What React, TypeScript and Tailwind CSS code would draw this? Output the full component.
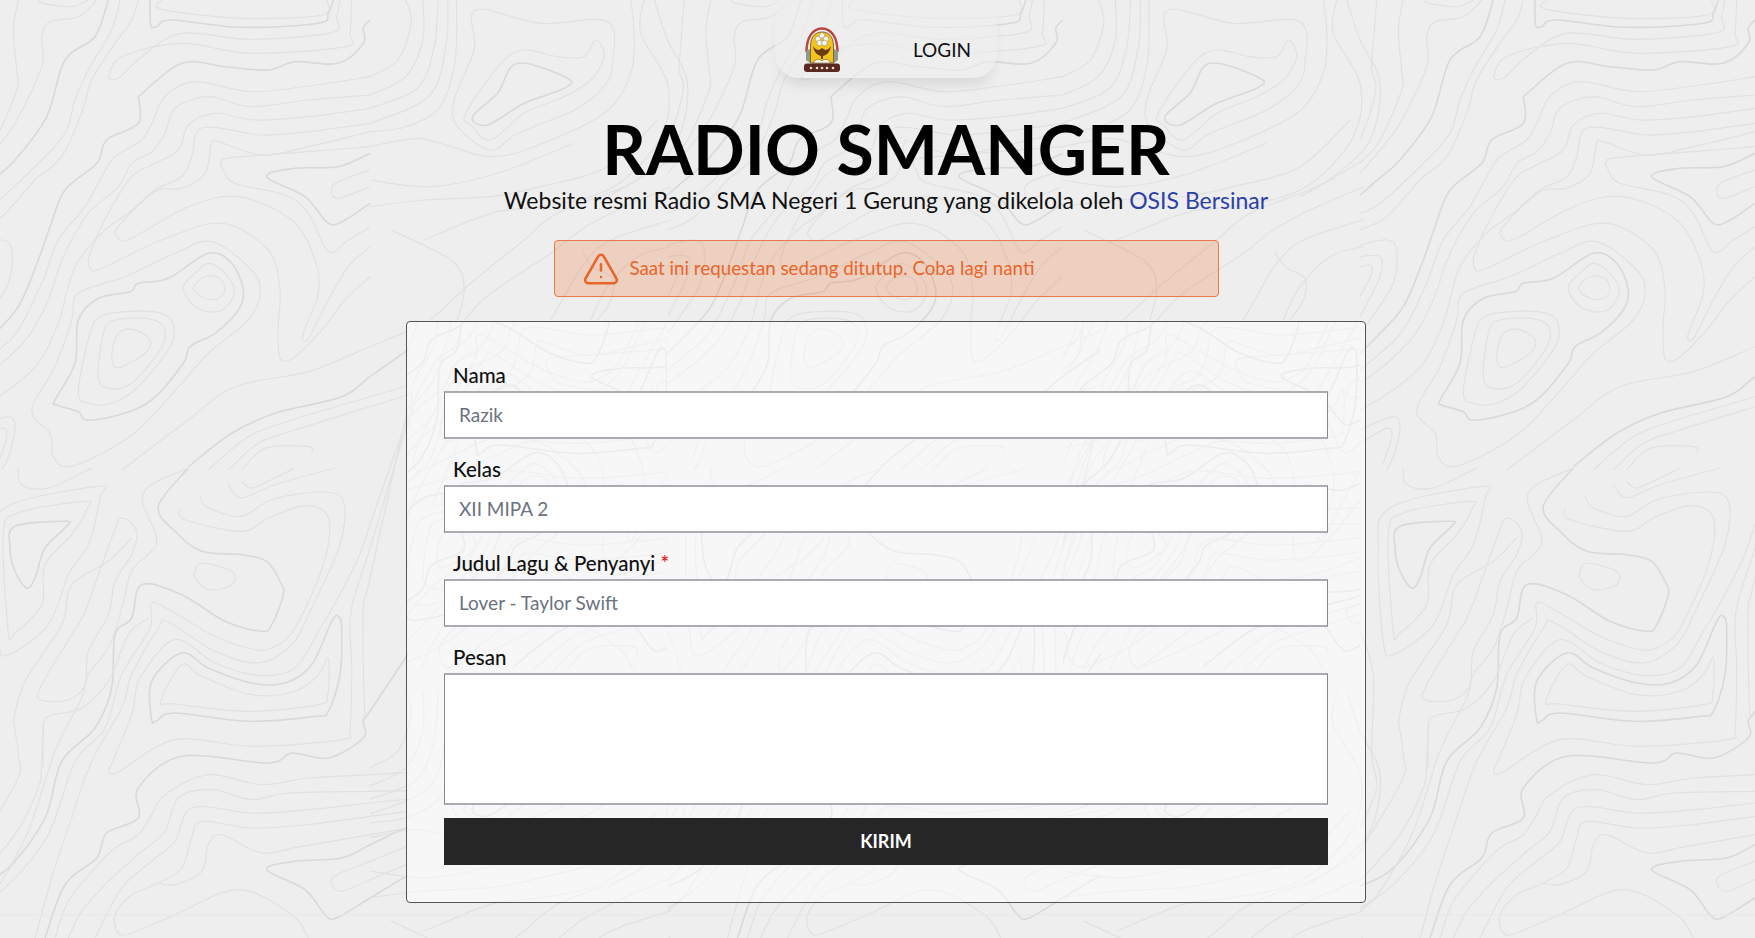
import { TriangleAlert } from "lucide-react";

// contour lines of the page background, traced at 3x zoom
type Line = { h?: boolean; p: number[] };

const TOP: Line[] = [
  { h: true, p: [490, 290, 620, 190, 750, 200, 880, 210, 960, 185, 1090, 190, 1165, 130, 1165, 85, 1185, 60] },
  { h: true, p: [490, 290, 490, 370, 395, 420, 365, 490, 270, 570, 225, 680, 190, 780, 130, 920, 50, 1010, 0, 1060] },
  { h: true, p: [525, 0, 527, 75, 545, 80, 590, 60, 800, 82, 1030, 70, 1060, 40, 1075, 0] },
  { p: [560, 0, 560, 28, 800, 55, 1040, 45, 1055, 0] },
  { p: [400, 235, 430, 235, 500, 170, 620, 100, 820, 118, 1070, 98, 1085, 50, 1095, 0] },
  { p: [400, 235, 440, 170, 620, 130, 830, 160, 1110, 140, 1125, 100, 1130, 0] },
  { p: [1185, 230, 1020, 255, 830, 275, 660, 245, 570, 290, 535, 360, 500, 420, 420, 470, 380, 530, 330, 620, 250, 720, 200, 850, 130, 990, 60, 1060, 0, 1110] },
  { p: [1185, 285, 1000, 300, 830, 320, 700, 290, 600, 325, 570, 400, 530, 455, 470, 490, 430, 560, 340, 640, 270, 760, 220, 900, 160, 1010, 80, 1090, 0, 1150] },
  { p: [1185, 325, 1000, 350, 840, 360, 720, 340, 640, 375, 610, 450, 530, 495, 470, 530, 400, 640, 345, 760, 345, 805, 380, 805, 560, 720, 740, 670, 880, 750, 915, 870, 910, 970, 915, 1075, 960, 1070, 1040, 990, 1110, 900, 1185, 830] },
  { p: [1185, 370, 1000, 395, 860, 405, 740, 385, 670, 390, 650, 470, 620, 530, 540, 570, 460, 640, 390, 690, 300, 800, 250, 970, 190, 1090, 100, 1170, 0, 1230] },
  { p: [1185, 395, 1000, 440, 860, 465, 730, 425, 710, 430, 690, 520, 620, 565, 540, 575, 430, 680, 430, 715, 470, 715, 640, 620, 790, 590, 950, 660, 1020, 780, 1030, 880, 985, 1000, 1000, 1015, 1060, 900, 1120, 800, 1185, 740] },
  { p: [1185, 440, 1000, 455, 800, 470, 740, 480, 745, 510, 780, 550, 930, 585, 1000, 640, 1060, 755, 1120, 720, 1185, 680] },
  { h: true, p: [1185, 460, 1090, 500, 960, 505, 875, 530, 990, 590, 1060, 670, 1110, 660, 1185, 610] },
  { p: [1185, 510, 1090, 545, 1070, 570, 1090, 595, 1185, 560] },
  { p: [655, 865, 690, 830, 735, 835, 750, 870, 730, 895, 690, 895, 655, 865] },
  { p: [625, 860, 665, 815, 700, 790, 745, 815, 778, 870, 750, 925, 700, 935, 650, 910, 625, 860] },
  { h: true, p: [240, 1200, 300, 1090, 310, 960, 370, 895, 465, 875, 490, 850, 580, 835, 700, 760, 770, 790, 805, 870, 790, 930, 720, 1000, 645, 1040, 625, 1090, 530, 1200, 430, 1245, 335, 1260, 310, 1235, 245, 1215, 240, 1200] },
  { p: [170, 1230, 240, 1100, 290, 960, 310, 880, 450, 830, 600, 760, 710, 725, 830, 810, 855, 880, 820, 960, 700, 1060, 620, 1150, 500, 1280, 400, 1350, 280, 1400, 235, 1370, 225, 1300, 170, 1230] },
  { p: [412, 1050, 430, 1000, 475, 988, 525, 1020, 510, 1060, 440, 1100, 415, 1095, 412, 1050] },
  { p: [370, 1130, 385, 1000, 420, 960, 530, 958, 570, 990, 555, 1050, 470, 1150, 400, 1165, 370, 1130] },
  { p: [310, 1175, 345, 1000, 375, 950, 450, 935, 560, 940, 595, 975, 585, 1040, 490, 1160, 410, 1210, 340, 1210, 310, 1175] },
  { h: true, p: [1185, 1130, 1100, 1190, 900, 1240, 770, 1300, 640, 1400] },
  { p: [1185, 1040, 1000, 1115, 780, 1160, 640, 1260, 440, 1410] },
  { p: [1185, 1190, 950, 1260, 820, 1310, 700, 1410] },
  { p: [1185, 1220, 960, 1290, 850, 1330, 760, 1410] },
  { p: [1010, 1360, 1000, 1340, 870, 1345, 800, 1410] },
  { p: [50, 0, 40, 130, 35, 210, 48, 260, 30, 340, 0, 420] },
  { p: [130, 0, 115, 90, 125, 210, 125, 270, 60, 420, 0, 490] },
  { h: true, p: [400, 0, 360, 110, 270, 180, 215, 350, 120, 480, 40, 550, 0, 585] },
  { p: [190, 0, 205, 10, 290, 20, 340, 0] },
  { p: [365, 0, 310, 50, 225, 65, 200, 110, 200, 200, 120, 370, 60, 450, 0, 520] },
  { p: [435, 0, 410, 90, 340, 210, 300, 300, 270, 400, 190, 490, 60, 610, 0, 640] },
  { p: [490, 0, 470, 60, 420, 130, 350, 240, 320, 340, 260, 470, 180, 540, 80, 650, 0, 690] },
  { p: [0, 890, 35, 820, 30, 795, 0, 800] },
  { p: [0, 950, 60, 830, 60, 770, 0, 770] },
  { p: [0, 735, 80, 720, 110, 750, 100, 850, 30, 960, 0, 1000] },
  { p: [0, 1290, 100, 1250, 120, 1290, 100, 1370, 80, 1410] },
  { p: [0, 1330, 80, 1285, 95, 1310, 70, 1390] },
];

const BOTTOM: Line[] = [
  { h: true, p: [0, 1255, 100, 1200, 210, 1050, 260, 880, 360, 780, 410, 660, 420, 500, 470, 450, 500, 350, 620, 380, 750, 460, 860, 490, 890, 470, 925, 380, 915, 340, 875, 280, 800, 260, 680, 250, 600, 190, 550, 115, 640, 0] },
  { h: true, p: [530, 755, 530, 640, 620, 555, 700, 600, 830, 645, 930, 645, 1010, 590, 1070, 460, 1090, 445, 1100, 480, 1095, 620, 1060, 730, 1020, 745, 820, 760, 600, 735, 545, 758, 530, 755] },
  { p: [558, 700, 620, 590, 680, 625, 830, 680, 960, 670, 1030, 620, 1060, 570, 1058, 680, 1030, 710, 820, 730, 600, 708, 558, 700] },
  { p: [400, 910, 430, 912, 600, 815, 830, 835, 1100, 815, 1125, 780, 1130, 600, 1128, 430, 1185, 240] },
  { p: [400, 910, 470, 740, 495, 630, 600, 515, 720, 585, 850, 622, 960, 600, 1030, 490, 1075, 415, 1150, 270, 1185, 170] },
  { p: [615, 120, 630, 155, 800, 190, 880, 150, 990, 113, 1060, 150, 1045, 290, 960, 480, 900, 535, 840, 545, 720, 505, 590, 430, 530, 405, 525, 480, 440, 620, 390, 780, 300, 880, 220, 1100, 100, 1250, 0, 1320] },
  { p: [675, 85, 700, 120, 800, 145, 890, 95, 1040, 72, 1105, 100, 1095, 230, 1010, 420, 950, 530, 850, 585, 720, 550, 580, 462, 550, 480, 470, 620, 440, 720, 350, 880, 290, 1050, 230, 1230, 180, 1410] },
  { p: [760, 50, 800, 90, 900, 50, 1080, 0] },
  { p: [800, 40, 830, 60, 900, 30, 960, 0] },
  { p: [660, 310, 680, 285, 770, 310, 770, 350, 700, 365, 660, 330, 660, 310] },
  { p: [640, 0, 505, 75, 545, 210, 520, 260, 470, 310, 435, 440, 400, 540, 340, 620, 320, 690, 240, 850, 160, 1090, 60, 1270, 0, 1330] },
  { p: [195, 695, 200, 650, 290, 500, 330, 430, 410, 210, 440, 150, 485, 190, 470, 260, 420, 340, 400, 440, 340, 550, 330, 650, 280, 695, 195, 695] },
  { h: true, p: [105, 240, 120, 175, 270, 160, 275, 175, 210, 240, 180, 330, 155, 360, 120, 310, 105, 240] },
  { p: [100, 490, 85, 200, 130, 135, 330, 100, 335, 125, 290, 200, 210, 290, 200, 410, 120, 495, 100, 490] },
  { p: [55, 260, 90, 120, 370, 55, 375, 90, 340, 230, 280, 320, 220, 470, 100, 560, 70, 520, 55, 260] },
  { p: [130, 0, 140, 50, 220, 60, 350, 0] },
  { p: [205, 900, 205, 770, 230, 742, 320, 720, 400, 640, 460, 500, 520, 450] },
  { p: [205, 770, 200, 880, 190, 960, 120, 1100, 0, 1240] },
  { p: [115, 760, 150, 640, 260, 470, 290, 350, 400, 280, 470, 210] },
  { p: [115, 760, 130, 860, 125, 940, 0, 1150] },
  { h: true, p: [1185, 730, 1165, 760, 1165, 810, 1060, 870, 950, 855, 880, 885, 620, 865, 490, 960, 490, 1050, 395, 1095, 365, 1170, 270, 1250, 210, 1410] },
  { p: [1185, 920, 1000, 930, 860, 950, 700, 920, 570, 980, 530, 1040, 490, 1100, 420, 1140, 360, 1200, 280, 1300, 240, 1410] },
  { p: [1185, 970, 940, 975, 830, 995, 710, 965, 610, 990, 570, 1090, 500, 1150, 400, 1240, 320, 1330, 280, 1410] },
  { p: [1185, 1005, 1000, 1025, 830, 1035, 680, 1015, 630, 1040, 600, 1120, 530, 1180, 440, 1260, 360, 1410] },
  { p: [1185, 1045, 1000, 1070, 830, 1080, 680, 1060, 650, 1110, 620, 1200, 550, 1245, 470, 1280, 420, 1340, 430, 1395, 470, 1395, 600, 1340, 790, 1265, 950, 1340, 1000, 1410] },
  { p: [1185, 1100, 980, 1135, 860, 1155, 740, 1100, 700, 1130, 680, 1210, 600, 1250, 550, 1245] },
  { h: true, p: [1185, 1130, 1100, 1170, 960, 1180, 875, 1205, 990, 1265, 1050, 1340, 1085, 1350, 1185, 1290] },
  { p: [1185, 1180, 1085, 1220, 1070, 1245, 1100, 1270, 1185, 1235] },
  { p: [1185, 330, 1165, 420, 1165, 600, 1170, 750] },
  { p: [0, 490, 40, 620, 35, 860, 50, 960, 0, 1080] },
];

// the part of the tile between the two traced columns
const MIDDLE: Line[] = [
  { h: true, p: [645, 350, 720, 280, 780, 190, 930, 235, 920, 265, 800, 310, 690, 375, 645, 350] },
  { p: [625, 340, 730, 190, 800, 150, 900, 170, 980, 170, 1015, 120, 1040, 170, 1000, 240, 920, 290, 800, 340, 700, 420, 640, 375, 625, 340] },
  { p: [655, 30, 850, 70, 1050, 65, 1065, 190, 1040, 260, 950, 330, 780, 400, 700, 450, 600, 380, 590, 300, 650, 150, 655, 30] },
  { p: [337, 230, 421, 180, 461, 70, 445, 0] },
  { p: [337, 285, 445, 230, 496, 120, 496, 0] },
  { p: [337, 325, 479, 265, 530, 140, 542, 0] },
  { p: [337, 370, 513, 290, 565, 140, 571, 0] },
  { p: [337, 395, 445, 380, 548, 320, 593, 180, 597, 0] },
  { p: [337, 440, 480, 415, 580, 440, 700, 470, 830, 440, 1040, 340, 1120, 220, 1130, 100, 1120, 0] },
  { p: [1160, 0, 1150, 100, 1230, 250, 1215, 400, 1110, 530, 1000, 590, 850, 620, 700, 640, 500, 720] },
  { p: [1190, 0, 1230, 120, 1290, 250, 1260, 420, 1150, 530, 1050, 590] },
  { p: [1240, 560, 1080, 630, 970, 690, 880, 760, 700, 880, 620, 960] },
  { p: [1240, 480, 1100, 560, 900, 640, 800, 720, 640, 850, 520, 960] },
  { p: [1240, 660, 1060, 720, 980, 790, 920, 890, 880, 960] },
  { p: [1240, 740, 1140, 770, 1050, 860, 1000, 960] },
  { p: [337, 620, 500, 600, 700, 590, 850, 560, 1050, 500, 1200, 360] },
  { p: [337, 540, 520, 560, 720, 520, 950, 430] },
  { p: [975, 755, 1005, 800, 1065, 835, 1060, 900, 1020, 960] },
  { p: [400, 690, 580, 780, 620, 860, 600, 960] },
];

// lines cut off at the right edge of the traced column run on a little, so the
// strip beside the form is not left empty
function extended(line: Line, oy: number) {
  const p = [...line.p];
  const n = p.length;
  if (p[n - 2] === 1185 && oy + p[n - 1] / 3 > 320) {
    const dy = (p[n - 1] - p[n - 3]) / Math.max(1, p[n - 2] - p[n - 4]);
    p.push(1300, p[n - 1] + dy * 115);
  }
  if (p[0] === 1185 && oy + p[1] / 3 > 320) {
    const dy = (p[1] - p[3]) / Math.max(1, p[0] - p[2]);
    p.unshift(1300, p[1] + dy * 115);
  }
  return p;
}

function toPath(line: Line, ox: number, oy: number) {
  const raw = extended(line, oy);
  const pts: [number, number][] = [];
  for (let i = 0; i < raw.length; i += 2) {
    pts.push([ox + raw[i] / 3, oy + raw[i + 1] / 3]);
  }
  const closed = raw[0] === raw[raw.length - 2] && raw[1] === raw[raw.length - 1];
  const at = (i: number) => {
    if (closed) {
      const n = pts.length - 1;
      return pts[((i % n) + n) % n];
    }
    return pts[Math.max(0, Math.min(pts.length - 1, i))];
  };
  let d = `M${pts[0][0].toFixed(1)} ${pts[0][1].toFixed(1)}`;
  for (let i = 0; i < pts.length - 1; i++) {
    const a = at(i - 1);
    const b = at(i);
    const c = at(i + 1);
    const e = at(i + 2);
    d += `C${(b[0] + (c[0] - a[0]) / 6).toFixed(1)} ${(b[1] + (c[1] - a[1]) / 6).toFixed(1)} ${(c[0] - (e[0] - b[0]) / 6).toFixed(1)} ${(c[1] - (e[1] - b[1]) / 6).toFixed(1)} ${c[0].toFixed(1)} ${c[1].toFixed(1)}`;
  }
  return d;
}

function Group({ lines, ox, oy }: { lines: Line[]; ox: number; oy: number }) {
  return (
    <>
      {lines.map((line, i) => (
        <path
          key={i}
          d={toPath(line, ox, oy)}
          fill="none"
          stroke={line.h ? "#d9d9d9" : "#e1e1e1"}
          strokeWidth={line.h ? 1.6 : 1.2}
        />
      ))}
    </>
  );
}

function Contours() {
  return (
    <svg className="absolute inset-0 h-full w-full" width="1755" height="938">
      <defs>
        <clipPath id="form-left">
          <rect x="406" y="321" width="261" height="582" />
        </clipPath>
        <clipPath id="form-right">
          <rect x="1063" y="321" width="297" height="582" />
        </clipPath>
      </defs>
      {[-25, 667.5, 1360].map((ox) => (
        <g key={ox}>
          <Group lines={TOP} ox={ox} oy={0} />
          <Group lines={BOTTOM} ox={ox} oy={468} />
        </g>
      ))}
      {[257.5, 950].map((ox) => (
        <g key={ox}>
          <Group lines={MIDDLE} ox={ox} oy={0} />
          <Group lines={MIDDLE} ox={ox} oy={691} />
        </g>
      ))}
      <g clipPath="url(#form-left)">
        <Group lines={TOP} ox={300} oy={200} />
        <Group lines={BOTTOM} ox={300} oy={200} />
      </g>
      <g clipPath="url(#form-right)">
        <Group lines={TOP} ox={990} oy={200} />
        <Group lines={BOTTOM} ox={990} oy={200} />
      </g>
      <path d="M0 915H1755" stroke="#e7e7e7" strokeWidth="1" />
    </svg>
  );
}

function SchoolLogo() {
  return (
    <svg width="38" height="46" viewBox="0 0 38 46" className="shrink-0">
      <path d="M3.5 25C3.5 10 10 1.5 19 1.5S34.500 10 34.500 25" fill="none" stroke="#b8453f" strokeWidth="2.4" />
      <path d="M7.500 36V19C7.500 9 13 5 19 5s11.500 4 11.500 14v17z" fill="#f1c31c" stroke="#6b4a1c" strokeWidth="0.8" />
      <path d="M3 24l4-2v14l-4-3zM35 24l-4-2v14l4-3z" fill="#8d9c86" />
      <g fill="#f6f4ea" stroke="#8b8464" strokeWidth="0.5">
        <circle cx="19" cy="8.500" r="2.800" />
        <circle cx="15" cy="12" r="2.800" />
        <circle cx="23" cy="12" r="2.800" />
        <circle cx="16.500" cy="16" r="2.800" />
        <circle cx="21.500" cy="16" r="2.800" />
      </g>
      <path d="M10 19c1 6 4 9 8 10v3h2v-3c4-1 7-4 8-10-2 3-4 4-6 4l-3-2-3 2c-2 0-4-1-6-4z" fill="#6b3a17" />
      <path d="M11 34c3-2 6-2 8 0 2-2 5-2 8 0v2H11z" fill="#f6f4ea" stroke="#6b4a1c" strokeWidth="0.5" />
      <rect x="1" y="36.500" width="36" height="8.500" rx="3" fill="#5a2a22" />
      <g fill="#e8dcc8">
        <circle cx="8" cy="41" r="1.300" />
        <circle cx="14" cy="41" r="1.300" />
        <circle cx="19" cy="41" r="1.300" />
        <circle cx="24" cy="41" r="1.300" />
        <circle cx="30" cy="41" r="1.300" />
      </g>
    </svg>
  );
}

function Field({
  label,
  placeholder,
  required,
}: {
  label: string;
  placeholder: string;
  required?: boolean;
}) {
  return (
    <div className="mb-4">
      <label className="block h-[30px] pl-[9px] text-[20.5px] leading-[29px] font-medium text-[#111111]">
        {label}
        {required && <span className="text-[#e02424]"> *</span>}
      </label>
      <input
        type="text"
        placeholder={placeholder}
        className="block h-12 w-full border border-y-2 border-x-[#85888d] border-y-[#a9acb1] bg-white px-[14px] pb-[2px] text-[19px] text-[#111111] placeholder:text-[#6b7280]"
      />
    </div>
  );
}

export default function App() {
  return (
    <div className="relative min-h-screen overflow-hidden bg-[#eeeeee] pl-[17px] font-['Lato',sans-serif]">
      <Contours />
      <div className="relative z-10 flex flex-col items-center">
        <nav className="flex h-[78px] w-[222px] items-center rounded-b-[24px] bg-[#eeeeee]/60 pl-[28px] pt-[22px] shadow-[0_12px_14px_-6px_rgba(0,0,0,0.1)]">
          <SchoolLogo />
          <a className="ml-[72px] text-[19px] text-[#111111]">LOGIN</a>
        </nav>

        <h1 className="mt-[34px] mb-[2px] text-[68px] leading-[74px] font-bold whitespace-nowrap text-black">
          RADIO SMANGER
        </h1>
        <p className="text-[23px] leading-[24px] whitespace-nowrap text-[#111111]">
          Website resmi Radio SMA Negeri 1 Gerung yang dikelola oleh{" "}
          <a className="text-[#2b41a8]">OSIS Bersinar</a>
        </p>

        <div className="mt-[28px] flex h-[57px] w-[665px] items-center rounded border border-[#e9794a] bg-[#ea580c]/20 pl-[27px] text-[#e8662c]">
          <TriangleAlert size={38} strokeWidth={1.6} className="shrink-0" />
          <span className="ml-[10px] text-[18.75px]">
            Saat ini requestan sedang ditutup. Coba lagi nanti
          </span>
        </div>

        <form className="mt-[24px] w-[960px] rounded border border-[#555555] bg-white/50 px-[37px] pt-[39px] pb-[37px]">
          <Field label="Nama" placeholder="Razik" />
          <Field label="Kelas" placeholder="XII MIPA 2" />
          <Field label="Judul Lagu & Penyanyi" placeholder="Lover - Taylor Swift" required />
          <label className="block h-[30px] pl-[9px] text-[20.5px] leading-[29px] font-medium text-[#111111]">
            Pesan
          </label>
          <textarea className="block h-[132px] w-full resize-none border border-y-2 border-x-[#85888d] border-y-[#a9acb1] bg-white" />
          <button
            type="button"
            className="mt-[13px] block h-[47px] w-full bg-[#262626] text-[18px] font-bold text-white"
          >
            KIRIM
          </button>
        </form>
      </div>
    </div>
  );
}
